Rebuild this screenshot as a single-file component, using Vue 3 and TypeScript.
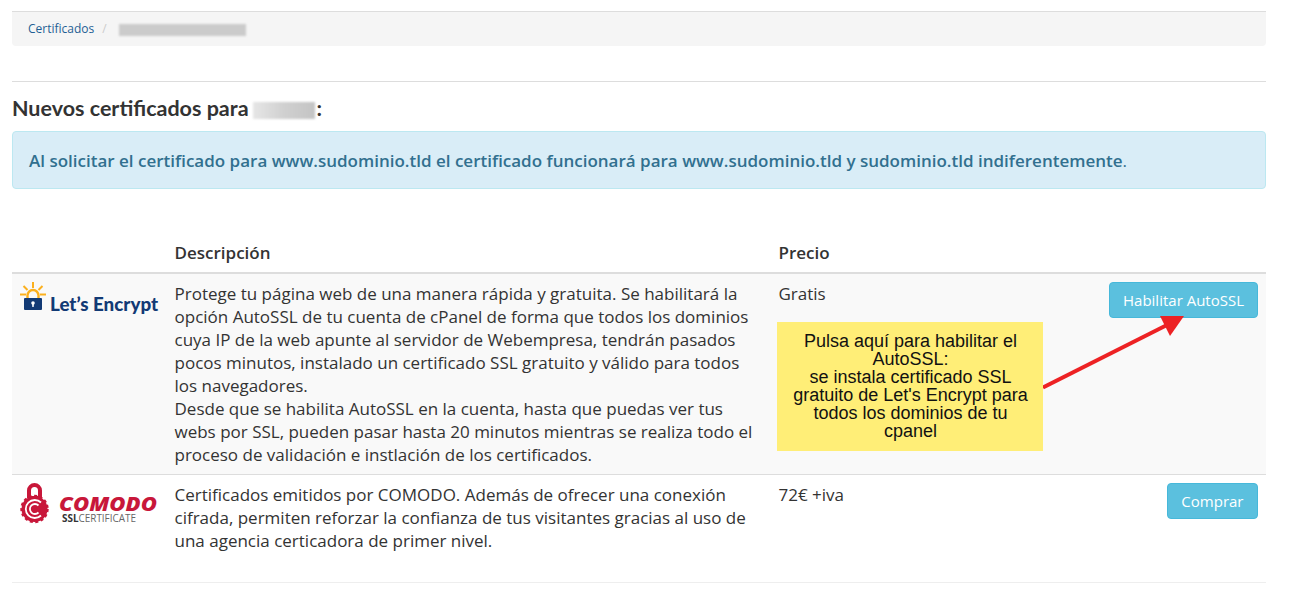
<script setup lang="ts">
const rays = ['M33 282v6', 'M23.500 286l4 4', 'M42.500 286l-4 4', 'M20 294.500h6', 'M40 294.500h6']
</script>

<template>
  <div class="page">
    <nav class="crumbs">
      <a class="crumb-link">Certificados</a>
      <span class="sep">/</span>
      <span class="blur crumb-blur"></span>
    </nav>
    <hr class="rule" />
    <h3 class="title">Nuevos certificados para<span class="blur title-blur"></span>:</h3>
    <div class="alert">
      Al solicitar el certificado para www.sudominio.tld el certificado funcionará para www.sudominio.tld y sudominio.tld indiferentemente<span class="dot">.</span>
    </div>
    <table class="tbl">
      <colgroup>
        <col class="c1" />
        <col class="c2" />
        <col class="c3" />
        <col />
      </colgroup>
      <thead>
        <tr>
          <th></th>
          <th>Descripción</th>
          <th>Precio</th>
          <th></th>
        </tr>
      </thead>
      <tbody>
        <tr class="first">
          <td class="logo-cell">
            <svg class="logo-le" width="140" height="36" viewBox="0 0 140 36">
              <g fill="none" stroke="#fbb01e" stroke-width="2" transform="translate(-19 -281)">
                <path v-for="r in rays" :key="r" :d="r" />
                <path d="M27.500 299v-3.500a5.500 5.500 0 0 1 11 0v3.500" stroke-width="2.400" />
              </g>
              <rect x="5" y="17" width="18" height="12" rx="1" fill="#123a75" />
              <circle cx="14" cy="22" r="1.800" fill="#fff" />
              <rect x="13.200" y="22.500" width="1.600" height="3.400" fill="#fff" />
              <text x="31" y="30" class="le-text">Let’s Encrypt</text>
            </svg>
          </td>
          <td class="desc">
            Protege tu página web de una manera rápida y gratuita. Se habilitará la opción AutoSSL de tu cuenta de cPanel de forma que todos los dominios cuya IP de la web apunte al servidor de Webempresa, tendrán pasados pocos minutos, instalado un certificado SSL gratuito y válido para todos los navegadores.<br />
            Desde que se habilita AutoSSL en la cuenta, hasta que puedas ver tus webs por SSL, pueden pasar hasta 20 minutos mientras se realiza todo el proceso de validación e instlación de los certificados.
          </td>
          <td class="price">
            Gratis
            <div class="note">
              Pulsa aquí para habilitar el AutoSSL:<br />
              se instala certificado SSL gratuito de Let's Encrypt para todos los dominios de tu cpanel
            </div>
          </td>
          <td class="action"><button class="btn">Habilitar AutoSSL</button></td>
        </tr>
        <tr class="second">
          <td class="logo-cell">
            <svg class="logo-co" width="140" height="48" viewBox="0 0 140 48">
              <g fill="#c8173a">
                <path fill-rule="evenodd" d="M8 17V9.500a7.500 7.500 0 0 1 15 0V17zM12 15h7V9.500a3.500 3.500 0 0 0-7 0z" />
                <circle cx="15.500" cy="28" r="13" stroke="#c8173a" stroke-width="2.400" stroke-dasharray="3 2.500" />
              </g>
              <path d="M22 21.500a9 9 0 1 0 0 13" fill="none" stroke="#fff" stroke-width="1.800" />
              <path d="M19.500 24.500a5 5 0 1 0 0 7" fill="none" stroke="#fff" stroke-width="1.800" />
              <text x="40" y="30" class="co-text" textLength="98" lengthAdjust="spacingAndGlyphs">COMODO</text>
              <text x="43" y="41" class="ssl-b" textLength="74" lengthAdjust="spacingAndGlyphs">SSL<tspan class="ssl-l">CERTIFICATE</tspan></text>
            </svg>
          </td>
          <td class="desc">
            Certificados emitidos por COMODO. Además de ofrecer una conexión cifrada, permiten reforzar la confianza de tus visitantes gracias al uso de una agencia certicadora de primer nivel.
          </td>
          <td class="price">72€ +iva</td>
          <td class="action"><button class="btn buy">Comprar</button></td>
        </tr>
      </tbody>
    </table>
    <svg class="arrow" width="150" height="80" viewBox="0 0 150 80">
      <path d="M0 71.500L124 9" stroke="#ed2224" stroke-width="4" fill="none" />
      <path d="M117 0h24l-14 20z" fill="#ed2224" />
    </svg>
  </div>
</template>

<style>
html, body { background: #fff; margin: 0; }
</style>

<style scoped>
.page {
  position: relative;
  width: 1254px;
  height: 592px;
  margin-left: 12px;
  padding-top: 11px;
  box-sizing: border-box;
  font-family: "Open Sans", sans-serif;
  font-size: 17px;
  line-height: 23px;
  color: #333;
}
.crumbs {
  display: flex;
  align-items: center;
  height: 35px;
  box-sizing: border-box;
  padding: 0 16px 2px;
  background: #f5f5f5;
  border-top: 1px solid #ddd;
  border-radius: 0 0 4px 4px;
  font-size: 12px;
}
.crumb-link { color: #1f5f94; }
.sep { color: #ccc; margin: 0 12px 0 8px; }
.blur { display: inline-block; background: #cbcbcb; }
.crumb-blur { width: 127px; height: 12px; margin-top: 3px; filter: blur(1px); }
.rule { border: 0; border-top: 1px solid #ddd; margin: 35px 0 0; }
.title {
  margin: 14px 0 0;
  font-family: Lato, sans-serif;
  font-size: 21.500px;
  line-height: 24px;
  font-weight: 700;
  color: #333;
}
.title-blur {
  width: 62px;
  height: 17px;
  vertical-align: -3px;
  margin: 0 2px 0 4px;
  background: linear-gradient(90deg, #e6e6e6, #d0d0d0 50%, #c4c4c4);
  filter: blur(1px);
}
.alert {
  margin-top: 11px;
  height: 58px;
  box-sizing: border-box;
  padding: 17px 16px;
  background: #d9edf7;
  border: 1px solid #bce8f1;
  border-radius: 4px;
  color: #31708f;
  font-weight: 600;
}
.dot { font-weight: 400; }
.tbl {
  width: 100%;
  margin-top: 52px;
  border-collapse: collapse;
  table-layout: fixed;
}
.c1 { width: 154.500px; }
.c2 { width: 604px; }
.c3 { width: 300px; }
th {
  text-align: left;
  padding: 0 8px 8px;
  font-weight: 600;
  border-bottom: 2px solid #ddd;
  height: 22px;
}
td { padding: 8px 8px 8px; vertical-align: top; }
.first { background: #f9f9f9; }
.first td { border-bottom: 1px solid #ddd; }
.second td { padding-bottom: 30px; border-bottom: 1px solid #eee; }
.logo-cell { padding: 6px 0 0 8px !important; }
.logo-le { display: block; margin-top: 1px; margin-left: -1px; }
.logo-co { display: block; margin-left: -1px; }
.le-text { font-family: Lato, sans-serif; font-weight: 900; font-size: 18.800px; fill: #123a75; }
.co-text { font-family: "Open Sans", sans-serif; font-style: italic; font-weight: 800; font-size: 19px; fill: #c8173a; }
.ssl-b { font-family: "Open Sans", sans-serif; font-weight: 700; font-size: 10.500px; fill: #333; }
.ssl-l { font-weight: 400; fill: #666; }
.price { position: relative; }
.note {
  position: absolute;
  left: 6px;
  top: 48px;
  width: 266px;
  height: 129px;
  box-sizing: border-box;
  padding: 10px 11px 10px 13px;
  background: #ffee77;
  color: #111;
  font-family: "Liberation Sans", sans-serif;
  font-size: 18px;
  line-height: 18px;
  text-align: center;
}
.action { text-align: right; }
.btn {
  height: 36px;
  padding: 0 13px;
  background: #5bc0de;
  border: 1px solid #46b8da;
  border-radius: 4px;
  color: #fff;
  font: 400 15px "Open Sans", sans-serif;
}
.buy { padding: 0 13.500px; }
.arrow { position: absolute; left: 1031px; top: 316px; }
</style>
